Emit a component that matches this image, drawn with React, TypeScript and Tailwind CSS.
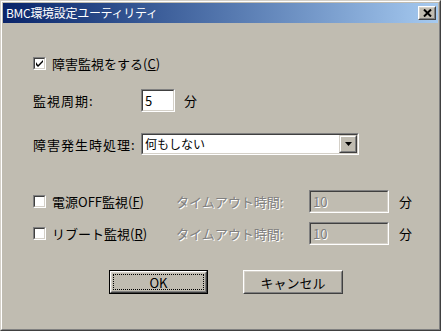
import React from "react";

const font = { fontFamily: '"Noto Sans CJK JP", "Liberation Sans", sans-serif' };

function Sunken({ className, children }: { className?: string; children?: React.ReactNode }) {
  return (
    <div className={`border border-t-[#808080] border-l-[#808080] border-r-white border-b-white ${className ?? ""}`}>
      <div className="h-full w-full border border-t-[#404040] border-l-[#404040] border-r-[#d4d0c8] border-b-[#d4d0c8]">
        {children}
      </div>
    </div>
  );
}

function CheckBox({ checked }: { checked?: boolean }) {
  return (
    <Sunken className="h-[13px] w-[13px] shrink-0">
      <div className="flex h-full w-full items-center justify-center bg-white">
        {checked && (
          <svg width="7" height="7" viewBox="0 0 7 7">
            <path d="M0 2 L0 5 L2 7 L7 2 L7 0 L2 5 Z" fill="#000" />
          </svg>
        )}
      </div>
    </Sunken>
  );
}

function Button({ label, def }: { label: React.ReactNode; def?: boolean }) {
  if (def) {
    return (
      <div className="h-[24px] w-[99px] border border-black">
        <div className="h-full w-full border border-t-white border-l-white border-r-[#404040] border-b-[#404040]">
          <div className="h-full w-full border border-t-[#d4d0c8] border-l-[#d4d0c8] border-r-[#808080] border-b-[#808080] p-[1px]">
            <div className="flex h-full w-full items-center justify-center border border-dotted border-black text-[13px] leading-none text-black" style={font}>
              {label}
            </div>
          </div>
        </div>
      </div>
    );
  }
  return (
    <div className="h-[24px] w-[100px] border border-t-white border-l-white border-r-[#404040] border-b-[#404040]">
      <div className="flex h-full w-full items-center justify-center border border-t-[#d4d0c8] border-l-[#d4d0c8] border-r-[#808080] border-b-[#808080] text-[13px] leading-none text-black" style={font}>
        {label}
      </div>
    </div>
  );
}

const disabledText = "text-[#808080] [text-shadow:1px_1px_0_#ffffff]";

export default function App() {
  return (
    <div className="h-[331px] w-[441px] border border-t-[#d4d0c8] border-l-[#d4d0c8] border-r-[#404040] border-b-[#404040]" style={font}>
      <div className="h-full w-full border border-t-white border-l-white border-r-[#808080] border-b-[#808080] bg-[#c0bcb1] p-[1px]">
        {/* Title bar */}
        <div className="flex h-[20px] items-center justify-between bg-gradient-to-r from-[#0a246a] to-[#a6caf0] pl-[3px] pr-[2px]">
          <span className="text-[12px] leading-none text-white tracking-[-0.3px]" style={font}>
            BMC環境設定ユーティリティ
          </span>
          <div className="h-[14px] w-[18px] border border-t-white border-l-white border-r-[#404040] border-b-[#404040] bg-[#c0bcb1]">
            <div className="flex h-full w-full items-center justify-center border border-t-[#d4d0c8] border-l-[#d4d0c8] border-r-[#808080] border-b-[#808080]">
              <svg width="9" height="8" viewBox="0 0 9 8">
                <path d="M1 0.5 L8 7.5 M8 0.5 L1 7.5" stroke="#000" strokeWidth="2" />
              </svg>
            </div>
          </div>
        </div>

        {/* Content */}
        <div className="flex flex-col pl-[30px] text-[13px] leading-none text-black">
          {/* Row 1 */}
          <div className="mt-[32px] flex h-[16px] items-center">
            <CheckBox checked />
            <span className="ml-[6px]">
              障害監視をする(<span className="underline">C</span>)
            </span>
          </div>

          {/* Row 2 */}
          <div className="mt-[18px] flex h-[23px] items-center">
            <span className="w-[108px] tracking-[1px]">監視周期:</span>
            <Sunken className="h-[23px] w-[34px]">
              <div className="flex h-full w-full items-center bg-white pl-[2px] text-[13px]">5</div>
            </Sunken>
            <span className="ml-[9px]">分</span>
          </div>

          {/* Row 3 */}
          <div className="mt-[21px] flex h-[22px] items-center">
            <span className="w-[108px] tracking-[1px]">障害発生時処理:</span>
            <Sunken className="h-[22px] w-[218px]">
              <div className="flex h-full w-full items-center justify-between bg-white pl-[2px]">
                <span className="text-[12px]">何もしない</span>
                <div className="h-full w-[18px] border border-t-[#d4d0c8] border-l-[#d4d0c8] border-r-[#404040] border-b-[#404040] bg-[#c0bcb1]">
                  <div className="flex h-full w-full items-center justify-center border border-t-white border-l-white border-r-[#808080] border-b-[#808080]">
                    <svg width="7" height="4" viewBox="0 0 7 4">
                      <path d="M0 0 L7 0 L3.5 4 Z" fill="#000" />
                    </svg>
                  </div>
                </div>
              </div>
            </Sunken>
          </div>

          {/* Row 4 */}
          <div className="mt-[35px] flex h-[23px] items-center">
            <CheckBox />
            <span className="ml-[6px] w-[124px]">
              電源OFF監視(<span className="underline">F</span>)
            </span>
            <span className={`w-[133px] ${disabledText}`}>タイムアウト時間:</span>
            <Sunken className="h-[23px] w-[80px]">
              <div className={`flex h-full w-full items-center pl-[2px] ${disabledText}`}>10</div>
            </Sunken>
            <span className="ml-[10px]">分</span>
          </div>

          {/* Row 5 */}
          <div className="mt-[9px] flex h-[23px] items-center">
            <CheckBox />
            <span className="ml-[6px] w-[124px]">
              リブート監視(<span className="underline">R</span>)
            </span>
            <span className={`w-[133px] ${disabledText}`}>タイムアウト時間:</span>
            <Sunken className="h-[23px] w-[80px]">
              <div className={`flex h-full w-full items-center pl-[2px] ${disabledText}`}>10</div>
            </Sunken>
            <span className="ml-[10px]">分</span>
          </div>

          {/* Buttons */}
          <div className="mt-[25px] flex pl-[76px]">
            <Button label="OK" def />
            <div className="ml-[35px]">
              <Button label="キャンセル" />
            </div>
          </div>
        </div>
      </div>
    </div>
  );
}
